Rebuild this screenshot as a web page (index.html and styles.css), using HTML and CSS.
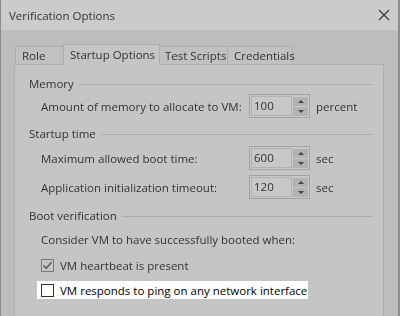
FILE: index.html
```html
<!DOCTYPE html>
<html>
<head>
<meta charset="utf-8">
<link rel="stylesheet" href="styles.css">
</head>
<body>
<div class="window">
  <div class="titlebar">
    <span class="title soft">Verification Options</span>
    <svg class="close soft" width="12" height="12" viewBox="0 0 12 12"><path d="M1 1L11 11M11 1L1 11" stroke="#3a3a3a" stroke-width="1.2" fill="none"/></svg>
  </div>
  <div class="body">
    <div class="tabs soft">
      <div class="tab t-role">Role</div>
      <div class="tab selected t-startup">Startup Options</div>
      <div class="tab t-test">Test Scripts</div>
      <div class="tab t-cred">Credentials</div>
    </div>
    <div class="panel">
      <div class="legend soft m-first"><span>Memory</span><i class="rule"></i></div>
      <div class="row soft m-spin1">
        <span class="label">Amount of memory to allocate to VM:</span>
        <div class="spin"><div class="field">100</div><div class="btns"><b class="up"></b><b class="down"></b></div></div>
        <span class="unit">percent</span>
      </div>
      <div class="legend soft m-leg2"><span>Startup time</span><i class="rule"></i></div>
      <div class="row soft m-spin2">
        <span class="label">Maximum allowed boot time:</span>
        <div class="spin"><div class="field">600</div><div class="btns"><b class="up"></b><b class="down"></b></div></div>
        <span class="unit">sec</span>
      </div>
      <div class="row soft m-spin3">
        <span class="label">Application initialization timeout:</span>
        <div class="spin"><div class="field">120</div><div class="btns"><b class="up"></b><b class="down"></b></div></div>
        <span class="unit">sec</span>
      </div>
      <div class="legend soft m-leg3"><span>Boot verification</span><i class="rule"></i></div>
      <div class="text soft m-consider">Consider VM to have successfully booted when:</div>
      <div class="check soft m-heart">
        <span class="box checked"><svg width="11" height="11" viewBox="0 0 11 11"><path d="M1.5 5.5L4.3 8.3L9.5 2.2" stroke="#555" stroke-width="1.4" fill="none"/></svg></span>
        <span>VM heartbeat is present</span>
      </div>
      <div class="highlight">
        <span class="box"></span>
        <span>VM responds to ping on any network interface</span>
      </div>
    </div>
  </div>
</div>
</body>
</html>
```
FILE: styles.css
```css
html, body {
  margin: 0;
  padding: 0;
}
body {
  width: 400px;
  height: 316px;
  overflow: hidden;
  font-family: "Open Sans", "Liberation Sans", sans-serif;
  font-size: 11.5px;
  color: #333;
  background: #bcbcbc;
  white-space: nowrap;
}
.soft {
  filter: blur(0.6px);
}
.window {
  width: 400px;
  height: 316px;
  box-sizing: border-box;
  border-left: 1px solid #8c8c8c;
  border-right: 2px solid #8c8c8c;
  display: flex;
  flex-direction: column;
}
.titlebar {
  height: 30px;
  background: #cbcbcb;
  display: flex;
  align-items: center;
  justify-content: space-between;
  padding: 0 8px 0 8px;
  flex: none;
}
.title {
  font-size: 11.5px;
  color: #333;
}
.body {
  flex: 1;
  background: #bdbdbd;
  padding: 14px 13px 0 13px;
  display: flex;
  flex-direction: column;
}
.tabs {
  display: flex;
  align-items: flex-end;
  height: 20px;
  padding-left: 1px;
  position: relative;
  z-index: 1;
}
.tab {
  height: 18px;
  box-sizing: border-box;
  border: 1px solid #adadad;
  border-bottom: none;
  background: #c1c1c1;
  padding: 0 0 0 6px;
  line-height: 17px;
  margin-right: -1px;
}
.tab.selected {
  height: 21px;
  margin-bottom: -1px;
  background: #c5c5c5;
  line-height: 19px;
}
.t-role { width: 49px; }
.t-startup { width: 97px; }
.t-test { width: 69px; padding-left: 5px; }
.t-cred { width: 66px; }
.panel {
  flex: 1;
  background: #c5c5c5;
  border: 1px solid #b0b0b0;
  border-bottom: none;
  width: 370px;
  box-sizing: border-box;
  padding: 0 10px 0 14px;
  display: flex;
  flex-direction: column;
}
.legend {
  display: flex;
  align-items: center;
  height: 16px;
  line-height: 16px;
}
.rule {
  flex: 1;
  height: 1px;
  background: #acacac;
  margin-left: 5px;
  margin-top: 1px;
}
.row {
  display: flex;
  align-items: center;
  padding-left: 12px;
  height: 24px;
}
.label {
  width: 208px;
  flex: none;
}
.spin {
  width: 61px;
  height: 24px;
  box-sizing: border-box;
  border: 1px solid #a3a3a3;
  display: flex;
  padding: 1px;
  background: #c8c8c8;
}
.field {
  flex: 1;
  border: 1px solid #b2b2b2;
  line-height: 18px;
  padding-left: 2px;
}
.btns {
  width: 15px;
  display: flex;
  flex-direction: column;
  justify-content: center;
  gap: 1px;
  margin-left: 1px;
}
.btns b {
  height: 9px;
  background: #b2b2b2;
  position: relative;
}
.btns b::after {
  content: "";
  position: absolute;
  left: 5px;
  width: 0;
  height: 0;
  border-left: 3px solid transparent;
  border-right: 3px solid transparent;
}
.btns .up::after {
  top: 3px;
  border-bottom: 3px solid #444;
}
.btns .down::after {
  top: 3px;
  border-top: 3px solid #444;
}
.unit {
  margin-left: 6px;
}
.text {
  padding-left: 12px;
  height: 16px;
  line-height: 16px;
}
.check {
  display: flex;
  align-items: center;
  padding-left: 12px;
  height: 16px;
  gap: 6px;
}
.box {
  width: 13px;
  height: 13px;
  box-sizing: border-box;
  border: 1px solid #333;
  background: #fff;
  display: inline-flex;
  align-items: center;
  justify-content: center;
  flex: none;
}
.box.checked {
  border-color: #7a7a7a;
  background: #c5c5c5;
}
.highlight {
  display: flex;
  align-items: center;
  gap: 6px;
  background: #fff;
  color: #000;
  width: 271px;
  height: 18px;
  margin-left: 8px;
  padding-left: 4px;
  box-sizing: border-box;
}
.m-first { margin-top: 11px; }
.m-spin1 { margin-top: 2px; }
.m-leg2 { margin-top: 8px; }
.m-spin2 { margin-top: 4px; }
.m-spin3 { margin-top: 5px; }
.m-leg3 { margin-top: 9px; }
.m-consider { margin-top: 8px; }
.m-heart { margin-top: 9px; }
.highlight { margin-top: 8px; }
```
